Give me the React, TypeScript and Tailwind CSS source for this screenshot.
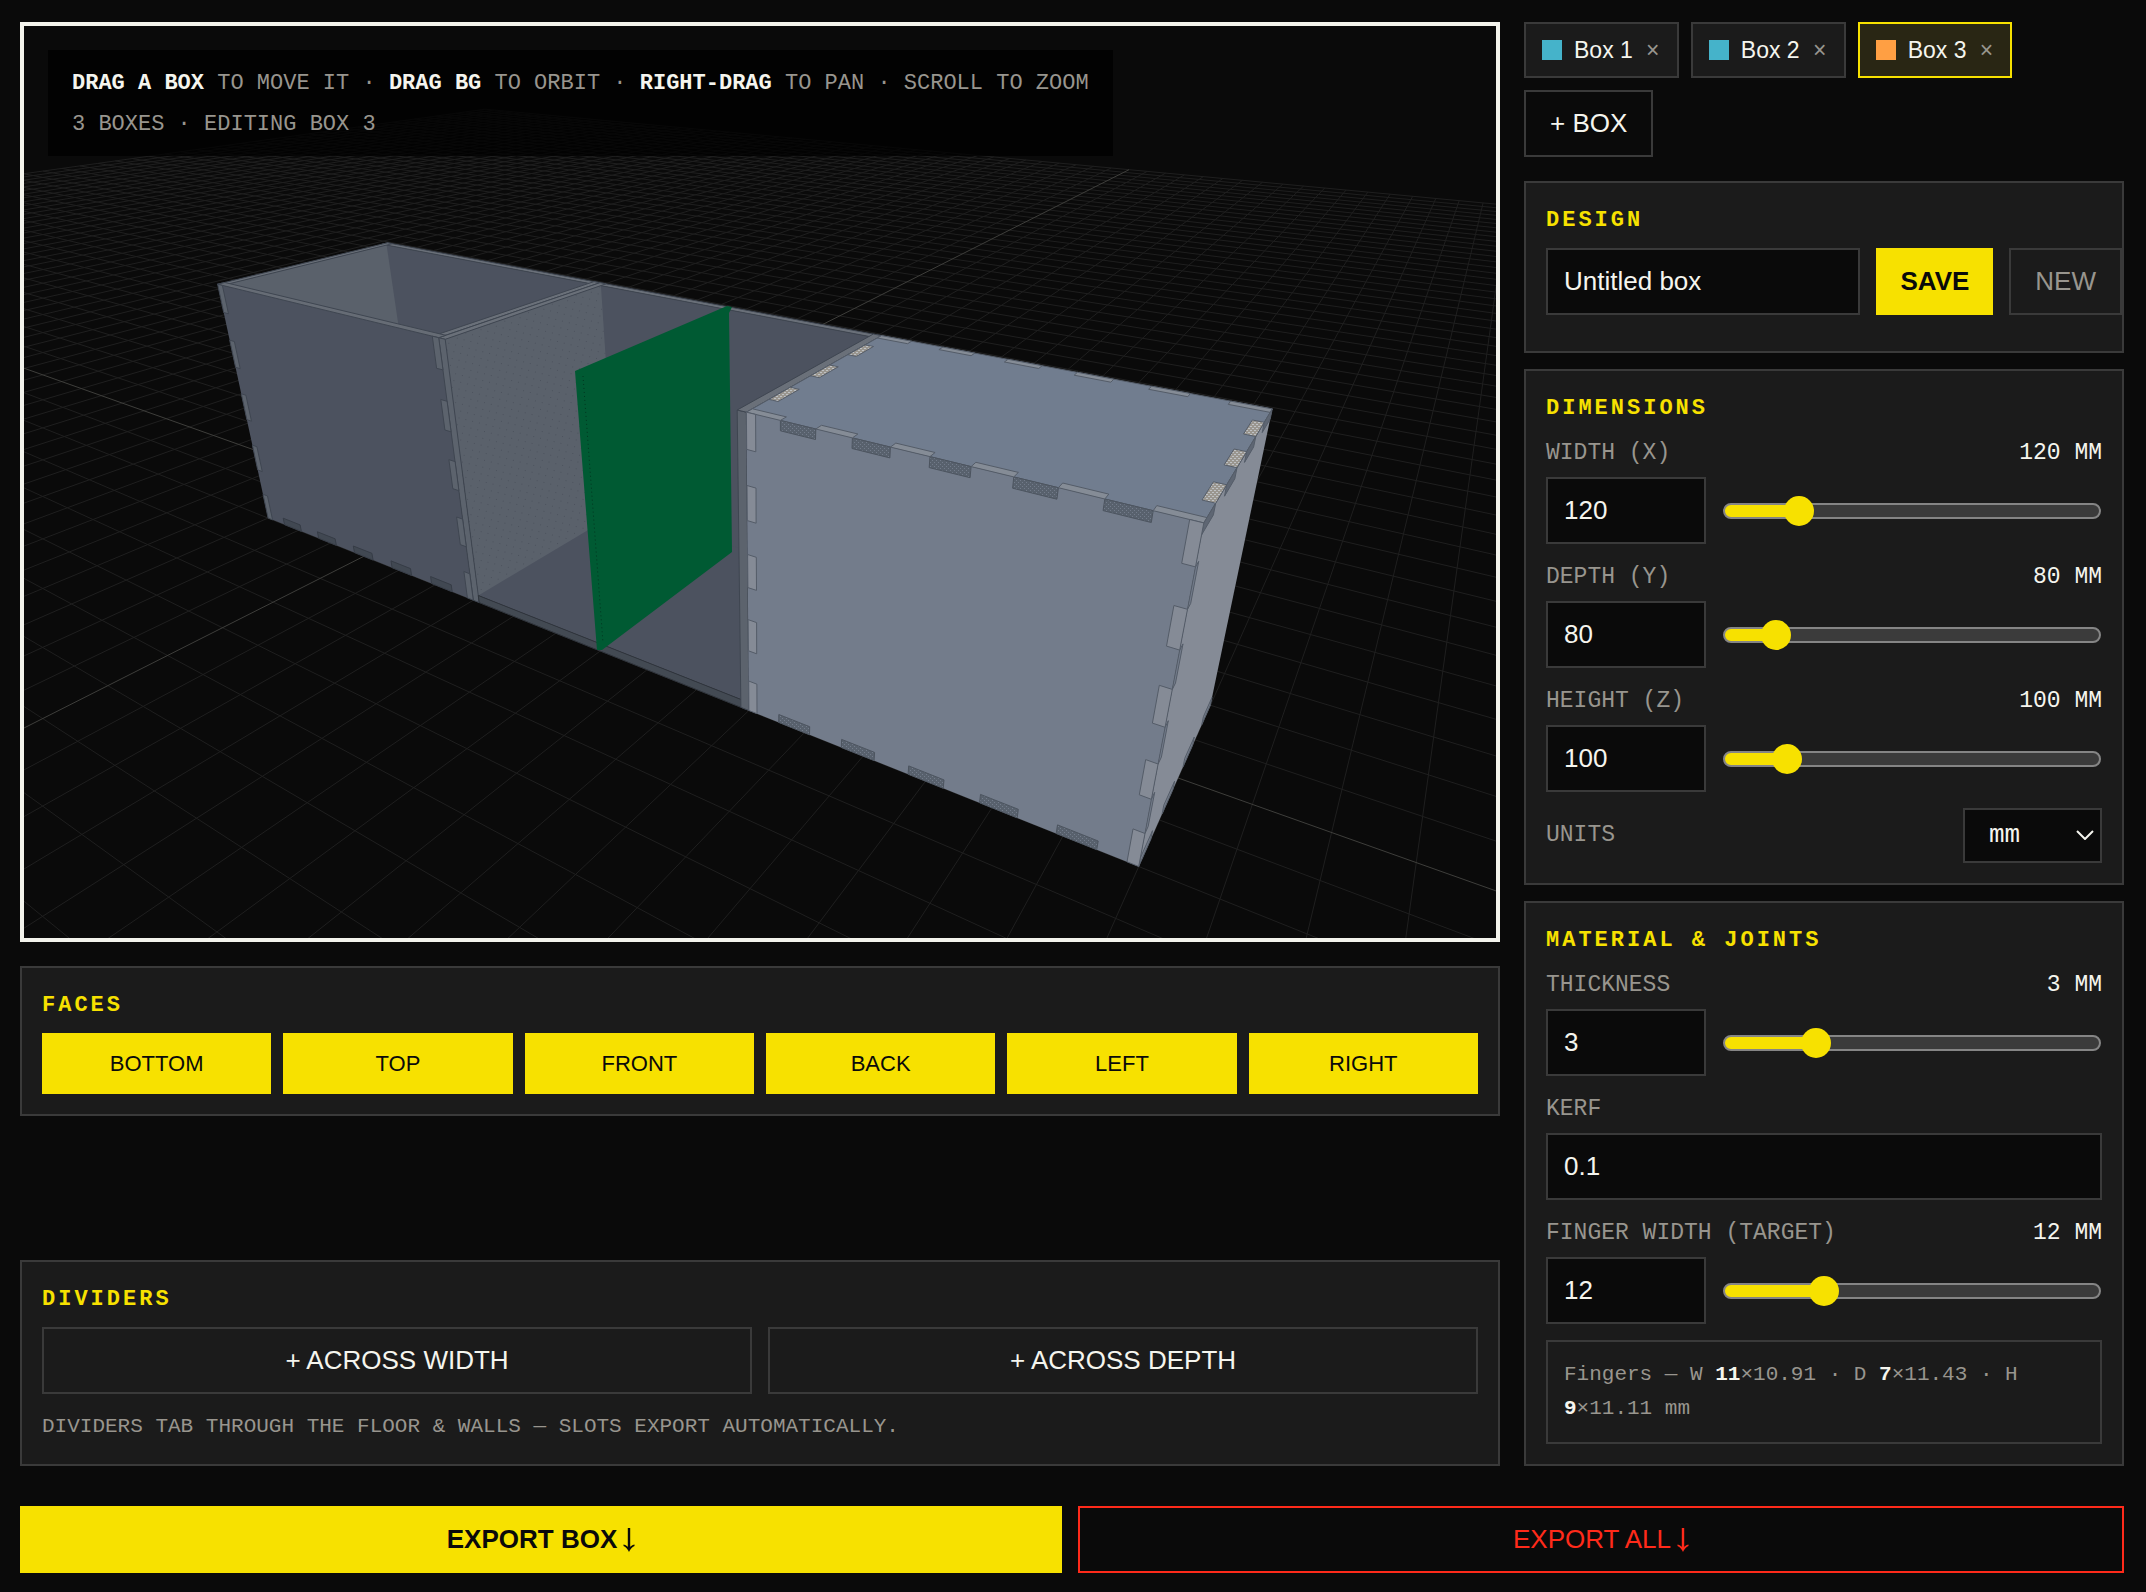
import React, { useMemo, useState } from "react";

/* ---------- scene projection ---------- */

type V3 = [number, number, number];
type V2 = [number, number];

// World corners (mm) and where the camera puts them on the 1472x912 stage.
const ANCHORS: [V3, V2][] = [
  [[0, 0, 100], [219, 285]],
  [[0, 0, 0], [269, 520]],
  [[120, 0, 100], [440, 336]],
  [[120, 0, 0], [472, 600]],
  [[240, 0, 100], [747, 412]],
  [[240, 0, 0], [748, 711]],
  [[360, 0, 100], [1205, 522]],
  [[360, 0, 0], [1138, 868]],
  [[360, 80, 100], [1274, 410]],
  [[360, 80, 0], [1212, 701]],
  [[240, 80, 100], [878, 336]],
  [[0, 80, 100], [386, 243]],
  [[60, 1040, 0], [1129, 170]],
  [[-940, 1040, 0], [485, 109]],
];

function solve(a: number[][], b: number[]): number[] {
  const n = b.length;
  const m = a.map((row, i) => [...row, b[i]]);
  for (let c = 0; c < n; c++) {
    let p = c;
    for (let r = c + 1; r < n; r++) if (Math.abs(m[r][c]) > Math.abs(m[p][c])) p = r;
    [m[c], m[p]] = [m[p], m[c]];
    for (let r = 0; r < n; r++) {
      if (r === c) continue;
      const f = m[r][c] / m[c][c];
      for (let k = c; k <= n; k++) m[r][k] -= f * m[c][k];
    }
  }
  return m.map((row, i) => row[n] / row[i]);
}

// Least-squares fit of a 3x4 camera matrix (last entry fixed to 1).
function fitCamera(): number[] {
  const rows: number[][] = [];
  const rhs: number[] = [];
  for (const [[X, Y, Z], [U, V]] of ANCHORS) {
    const x = X / 100, y = Y / 100, z = Z / 100, u = U / 1000, v = V / 1000;
    rows.push([x, y, z, 1, 0, 0, 0, 0, -u * x, -u * y, -u * z]);
    rhs.push(u);
    rows.push([0, 0, 0, 0, x, y, z, 1, -v * x, -v * y, -v * z]);
    rhs.push(v);
  }
  const n = 11;
  const ata = Array.from({ length: n }, (_, i) =>
    Array.from({ length: n }, (_, j) => rows.reduce((s, r) => s + r[i] * r[j], 0)),
  );
  const atb = Array.from({ length: n }, (_, i) => rows.reduce((s, r, k) => s + r[i] * rhs[k], 0));
  return solve(ata, atb);
}

const CAM = fitCamera();

function hom([X, Y, Z]: V3): V3 {
  const x = X / 100, y = Y / 100, z = Z / 100;
  return [
    (CAM[0] * x + CAM[1] * y + CAM[2] * z + CAM[3]) * 1000,
    (CAM[4] * x + CAM[5] * y + CAM[6] * z + CAM[7]) * 1000,
    CAM[8] * x + CAM[9] * y + CAM[10] * z + 1,
  ];
}

function project(p: V3): V2 {
  const [u, v, w] = hom(p);
  return [u / w, v / w];
}

function pts(list: V3[]): string {
  return list.map((p) => project(p).map((n) => n.toFixed(1)).join(",")).join(" ");
}

function groundLine(a: V3, b: V3): string {
  let ha = hom(a);
  let hb = hom(b);
  const near = 0.08;
  if (ha[2] < near && hb[2] < near) return "";
  const cut = (p: V3, q: V3): V3 => {
    const t = (near - p[2]) / (q[2] - p[2]);
    return [p[0] + (q[0] - p[0]) * t, p[1] + (q[1] - p[1]) * t, near];
  };
  if (ha[2] < near) ha = cut(ha, hb);
  if (hb[2] < near) hb = cut(hb, ha);
  const f = (h: V3) => `${(h[0] / h[2]).toFixed(1)} ${(h[1] / h[2]).toFixed(1)}`;
  return `M${f(ha)}L${f(hb)}`;
}

const odd = (n: number) => Array.from({ length: n }, (_, i) => i).filter((i) => i % 2 === 1);
const even = (n: number) => Array.from({ length: n }, (_, i) => i).filter((i) => i % 2 === 0);

const W = 120, D = 80, H = 100, T = 3;

// Quads lying in one of the three axis planes.
const onFront = (x0: number, x1: number, z0: number, z1: number, y = 0): V3[] => [[x0, y, z0], [x1, y, z0], [x1, y, z1], [x0, y, z1]];
const onTop = (x0: number, x1: number, y0: number, y1: number, z = H): V3[] => [[x0, y0, z], [x1, y0, z], [x1, y1, z], [x0, y1, z]];
const onSide = (x: number, y0: number, y1: number, z0: number, z1: number): V3[] => [[x, y0, z0], [x, y1, z0], [x, y1, z1], [x, y0, z1]];

function Face({ p, fill, edge = "none" }: { p: V3[]; fill: string; edge?: string }) {
  return <polygon points={pts(p)} fill={fill} stroke={edge} strokeWidth={1} strokeLinejoin="round" />;
}

function Scene() {
  const grid = useMemo(() => {
    let d = "";
    for (let i = -50; i <= 50; i++) {
      if (i === 0) continue;
      d += groundLine([60 + i * 20, -960, 0], [60 + i * 20, 1040, 0]);
      d += groundLine([-940, 40 + i * 20, 0], [1060, 40 + i * 20, 0]);
    }
    return d;
  }, []);
  const axes = groundLine([60, -960, 0], [60, 1040, 0]) + groundLine([-940, 40, 0], [1060, 40, 0]);
  const fw = W / 11, fh = H / 9, fd = D / 7;
  const dimEdge = "#3f4651";
  const litEdge = "#545c68";

  return (
    <svg viewBox="24 26 1472 912" preserveAspectRatio="xMidYMid slice" className="block h-full w-full" role="img" aria-label="3D preview of three boxes">
      <defs>
        <pattern id="speckDark" width="4" height="4" patternUnits="userSpaceOnUse">
          <rect width="4" height="4" fill="#58616d" />
          <rect width="1" height="1" fill="#727b8a" />
          <rect x="2" y="2" width="1" height="1" fill="#727b8a" />
        </pattern>
        <pattern id="speckTan" width="4" height="4" patternUnits="userSpaceOnUse">
          <rect width="4" height="4" fill="#9a968f" />
          <rect width="2" height="1" fill="#bec1c4" />
          <rect x="2" y="2" width="2" height="1" fill="#bec1c4" />
        </pattern>
        <pattern id="speckWall" width="7" height="7" patternUnits="userSpaceOnUse" patternTransform="rotate(14)">
          <rect width="7" height="7" fill="#5a616b" />
          <rect width="1" height="1" fill="#4c525d" />
        </pattern>
      </defs>
      <rect x="24" y="26" width="1472" height="912" fill="#0a0a0a" />
      <path d={grid} stroke="#1f1f1f" strokeWidth={1} fill="none" />
      <path d={axes} stroke="#3e3e3b" strokeWidth={1} fill="none" />

      {/* open boxes 1 and 2: inside faces */}
      <Face p={onFront(0, 2 * W, 0, H, D - T)} fill="#4c525f" />
      <Face p={onTop(W, 2 * W, 0, D, T)} fill="#4c525f" />
      <Face p={onSide(T, T, D - T, 0, H)} fill="#5a616b" />
      <Face p={onTop(0, 2 * W, D - T, D)} fill="#6a7079" edge={dimEdge} />
      <Face p={onTop(0, T, 0, D)} fill="#6a7079" edge={dimEdge} />
      <Face p={onSide(W + T, 0, D - T, T, H)} fill="url(#speckWall)" />
      <Face p={onTop(W - T, W, 0, D)} fill="#6a7079" edge={dimEdge} />
      <Face p={onTop(W, W + T, 0, D)} fill="#6a7079" edge={dimEdge} />

      {/* box 1: front wall */}
      <Face p={onFront(0, W, 0, H)} fill="#4c525f" />
      <Face p={onTop(0, W, 0, T)} fill="#666c75" edge={dimEdge} />
      <Face p={onFront(W, W + T, 0, H)} fill="#5c636d" edge={dimEdge} />
      {even(9).map((i) => (
        <g key={i}>
          <Face p={onFront(0, T, H - (i + 1) * fh, H - i * fh)} fill="#5c636d" edge={dimEdge} />
          <Face p={onFront(W - T, W, H - (i + 1) * fh, H - i * fh)} fill="#5c636d" edge={dimEdge} />
        </g>
      ))}
      {odd(11).map((i) => (
        <Face key={i} p={onFront(i * fw, (i + 1) * fw, 0, T)} fill="#414852" edge="#363c46" />
      ))}

      {/* box 2: floor edge, right wall and divider */}
      <Face p={onFront(W + T, 2 * W, 0, T)} fill="#434a53" edge="#30353d" />
      <Face p={onFront(2 * W - T, 2 * W, 0, H)} fill="#5c636d" edge={dimEdge} />
      <Face p={onTop(2 * W - T, 2 * W, 0, D)} fill="#6a7079" edge={dimEdge} />
      <polygon points="575,371 727,306 732,307 729,313 732,552 602,650 597,650" fill="#005a33" />
      <path d="M583 376L603 643" stroke="#00351f" strokeWidth={1} strokeDasharray="1 3" fill="none" />

      {/* box 3 */}
      <Face p={onSide(3 * W, 0, D, 0, H)} fill="#858b96" />
      <Face p={onTop(2 * W, 3 * W, 0, D)} fill="#717d8f" edge={litEdge} />
      <Face p={onFront(2 * W, 3 * W, 0, H)} fill="#737c8b" />
      {odd(11).map((i) => (
        <g key={i}>
          <Face p={onFront(2 * W + i * fw, 2 * W + (i + 1) * fw, H - T, H)} fill="url(#speckDark)" edge="#4c545f" />
          <Face p={onFront(2 * W + i * fw, 2 * W + (i + 1) * fw, 0, T)} fill="url(#speckDark)" edge="#4c545f" />
        </g>
      ))}
      {even(11).map((i) => (
        <g key={i}>
          <Face p={onTop(2 * W + i * fw, 2 * W + (i + 1) * fw, 0, T)} fill="#858c96" edge={litEdge} />
          <Face p={onTop(2 * W + i * fw, 2 * W + (i + 1) * fw, D - T, D)} fill="#858c96" edge={litEdge} />
        </g>
      ))}
      {odd(7).map((i) => (
        <g key={i}>
          <Face p={onTop(2 * W, 2 * W + T, i * fd, (i + 1) * fd)} fill="url(#speckTan)" edge={litEdge} />
          <Face p={onTop(3 * W - T, 3 * W, i * fd, (i + 1) * fd)} fill="url(#speckTan)" edge={litEdge} />
        </g>
      ))}
      {even(7).map((i) => (
        <g key={i}>
          <Face p={onSide(3 * W, i * fd, (i + 1) * fd, H - T, H)} fill="#5e6673" edge={litEdge} />
          <Face p={onSide(3 * W, i * fd, (i + 1) * fd, 0, T)} fill="#747c89" edge={litEdge} />
        </g>
      ))}
      {odd(9).map((i) => (
        <Face key={i} p={onSide(3 * W, 0, T, H - (i + 1) * fh, H - i * fh)} fill="#737c8b" edge={litEdge} />
      ))}
      {even(9).map((i) => (
        <g key={i}>
          <Face p={onFront(2 * W, 2 * W + T, H - (i + 1) * fh, H - i * fh)} fill="#858b96" edge={litEdge} />
          <Face p={onFront(3 * W - T, 3 * W, H - (i + 1) * fh, H - i * fh)} fill="#858b96" edge={litEdge} />
        </g>
      ))}
    </svg>
  );
}

/* ---------- controls ---------- */

const MONO = "font-['Liberation_Mono',monospace]";
const FIELD = "h-[67px] border-2 border-[#3a3a3a] bg-[#0a0a0a] px-4 text-[26px] text-[#f5f5ee] outline-none";
const OUTLINE_BTN = "h-[67px] border-2 border-[#3a3a3a] px-6 text-[26px] text-[#f5f5ee]";

function Panel({ title, className = "", children }: { title: string; className?: string; children: React.ReactNode }) {
  return (
    <section className={`border-2 border-[#3a3a3a] bg-[#1b1b1b] p-5 ${className}`}>
      <h2 className={`${MONO} mb-[11px] pt-px text-[22px] leading-[33px] font-bold tracking-[3px] text-[#f7e100]`}>{title}</h2>
      {children}
    </section>
  );
}

function Label({ id, text, value }: { id: string; text: string; value?: string }) {
  return (
    <div className={`${MONO} mb-[7px] flex justify-between pt-px text-[23px] leading-[33px]`}>
      <label htmlFor={id} className="text-[#98958e]">{text}</label>
      {value && <output htmlFor={id} className="text-[#f5f5ee]">{value}</output>}
    </div>
  );
}

function SliderField({ id, label, initial, min, max }: { id: string; label: string; initial: number; min: number; max: number }) {
  const [v, setV] = useState(initial);
  const f = (v - min) / (max - min);
  const fill = {
    "--fill": `calc(${(f * 100).toFixed(2)}% + ${(15 - 30 * f).toFixed(1)}px)`,
  } as React.CSSProperties;
  return (
    <div>
      <Label id={id} text={label} value={`${v} MM`} />
      <div className="flex items-center gap-4">
        <input id={id} type="text" inputMode="numeric" value={v} onChange={(e) => setV(Number(e.target.value) || 0)} className={`${FIELD} w-40`} />
        <input
          type="range"
          aria-label={`${label} slider`}
          min={min}
          max={max}
          value={v}
          onChange={(e) => setV(Number(e.target.value))}
          style={fill}
          className="mx-px h-8 min-w-0 flex-1 cursor-pointer appearance-none bg-transparent outline-none [&::-webkit-slider-runnable-track]:h-4 [&::-webkit-slider-runnable-track]:rounded-full [&::-webkit-slider-runnable-track]:border-2 [&::-webkit-slider-runnable-track]:border-[#858585] [&::-webkit-slider-runnable-track]:bg-[linear-gradient(to_right,#f7e100_var(--fill),#3b3b3b_var(--fill))] [&::-webkit-slider-thumb]:-mt-[9px] [&::-webkit-slider-thumb]:size-[30px] [&::-webkit-slider-thumb]:appearance-none [&::-webkit-slider-thumb]:rounded-full [&::-webkit-slider-thumb]:bg-[#f7e100]"
        />
      </div>
    </div>
  );
}

function BoxTab({ name, swatch, active = false }: { name: string; swatch: string; active?: boolean }) {
  return (
    <div className={`flex h-14 items-center gap-3 border-2 px-4 ${active ? "border-[#f7e100] bg-[#292614]" : "border-[#3a3a3a] bg-[#1b1b1b]"}`}>
      <span className={`size-5 ${swatch}`} />
      <button type="button" className="text-[23px] leading-8 text-[#f5f5ee]">{name}</button>
      <button type="button" aria-label={`Remove ${name}`} className="w-4 text-center text-[23px] leading-8 text-[#98958e]">×</button>
    </div>
  );
}

function DownArrow() {
  return (
    <svg viewBox="0 0 12 24" className="ml-[6px] inline-block h-6 w-3" aria-hidden="true">
      <path d="M6 0V20" stroke="currentColor" strokeWidth={2.4} fill="none" />
      <path d="M0.5 16.5C3 17 5 18.500 6 20C7 18.500 9 17 11.500 16.500V18C9 19 7 21.500 6 24C5 21.500 3 19 0.500 18Z" fill="currentColor" />
    </svg>
  );
}

const FACES = ["BOTTOM", "TOP", "FRONT", "BACK", "LEFT", "RIGHT"];

export default function App() {
  const [name, setName] = useState("Untitled box");
  const [kerf, setKerf] = useState("0.1");
  return (
    <div className="min-h-screen bg-[#0a0a0a] pt-[22px] pr-[22px] pb-5 pl-5 font-['Liberation_Sans',sans-serif] text-[#f5f5ee]">
      <main className="grid grid-cols-[minmax(0,1fr)_600px] gap-6">
        <div className="flex flex-col justify-between gap-6">
          <div className="flex flex-col gap-6">
            <div className="relative h-[920px] overflow-hidden border-4 border-[#f3f3ec]">
              <Scene />
              <div className={`${MONO} absolute top-6 left-6 bg-black/75 px-6 pt-[13px] pb-[11px] text-[22px] leading-[41px] text-[#98958e]`}>
                <p>
                  <b className="text-[#f5f5ee]">DRAG A BOX</b> TO MOVE IT · <b className="text-[#f5f5ee]">DRAG BG</b> TO ORBIT ·{" "}
                  <b className="text-[#f5f5ee]">RIGHT-DRAG</b> TO PAN · SCROLL TO ZOOM
                </p>
                <p>3 BOXES · EDITING BOX 3</p>
              </div>
            </div>
            <Panel title="FACES">
              <div className="grid grid-cols-6 gap-3">
                {FACES.map((f) => (
                  <button key={f} type="button" aria-pressed="true" className="h-[61px] bg-[#f7e100] text-[22px] text-[#0a0a0a]">{f}</button>
                ))}
              </div>
            </Panel>
          </div>
          <Panel title="DIVIDERS">
            <div className="grid grid-cols-2 gap-4">
              <button type="button" className={OUTLINE_BTN}>+ ACROSS WIDTH</button>
              <button type="button" className={OUTLINE_BTN}>+ ACROSS DEPTH</button>
            </div>
            <p className={`${MONO} mt-4 text-[21px] leading-[34px] text-[#98958e]`}>
              DIVIDERS TAB THROUGH THE FLOOR &amp; WALLS — SLOTS EXPORT AUTOMATICALLY.
            </p>
          </Panel>
        </div>

        <aside className="flex flex-col gap-4">
          <div className="mb-2 flex flex-wrap items-start gap-3">
            <BoxTab name="Box 1" swatch="bg-[#45b3ca]" />
            <BoxTab name="Box 2" swatch="bg-[#45b3ca]" />
            <BoxTab name="Box 3" swatch="bg-[#ff9f43]" active />
            <div className="w-full">
              <button type="button" className={OUTLINE_BTN}>+ BOX</button>
            </div>
          </div>

          <Panel title="DESIGN">
            <div className="-mr-5 mb-4 flex gap-4">
              <input aria-label="Design name" value={name} onChange={(e) => setName(e.target.value)} className={`${FIELD} min-w-0 flex-1`} />
              <button type="button" className="bg-[#f7e100] px-6 text-[26px] font-bold text-[#0a0a0a]">SAVE</button>
              <button type="button" className="border-2 border-[#3a3a3a] px-6 text-[26px] text-[#98958e]">NEW</button>
            </div>
          </Panel>

          <Panel title="DIMENSIONS">
            <div className="flex flex-col gap-4">
              <SliderField id="width" label="WIDTH (X)" initial={120} min={20} max={600} />
              <SliderField id="depth" label="DEPTH (Y)" initial={80} min={20} max={600} />
              <SliderField id="height" label="HEIGHT (Z)" initial={100} min={20} max={600} />
              <div className={`${MONO} flex items-center justify-between`}>
                <label htmlFor="units" className="text-[23px] leading-[33px] text-[#98958e]">UNITS</label>
                <div className="relative">
                  <select id="units" defaultValue="mm" className="block h-[55px] w-[139px] appearance-none border-2 border-[#3a3a3a] bg-[#0a0a0a] px-6 text-[26px] text-[#f5f5ee]">
                    <option>mm</option>
                    <option>in</option>
                  </select>
                  <svg viewBox="0 0 18 10" className="pointer-events-none absolute top-[22px] right-2 h-[10px] w-[18px]" aria-hidden="true">
                    <path d="M1 1L9 9L17 1" stroke="#f5f5ee" strokeWidth={2} fill="none" />
                  </svg>
                </div>
              </div>
            </div>
          </Panel>

          <Panel title="MATERIAL & JOINTS">
            <div className="flex flex-col gap-4">
              <SliderField id="thickness" label="THICKNESS" initial={3} min={1} max={10} />
              <div>
                <Label id="kerf" text="KERF" />
                <input id="kerf" value={kerf} onChange={(e) => setKerf(e.target.value)} className={`${FIELD} w-full`} />
              </div>
              <SliderField id="finger" label="FINGER WIDTH (TARGET)" initial={12} min={3} max={40} />
              <p className={`${MONO} border-2 border-[#3a3a3a] p-4 text-[21px] leading-[34px] text-[#98958e]`}>
                Fingers — W <b className="text-[#f5f5ee]">11</b>×10.91 · D <b className="text-[#f5f5ee]">7</b>×11.43 · H{" "}
                <b className="text-[#f5f5ee]">9</b>×11.11 mm
              </p>
            </div>
          </Panel>
        </aside>
      </main>

      <footer className="mt-10 flex gap-4">
        <button type="button" className="flex h-[67px] flex-1 items-center justify-center bg-[#f7e100] text-[26px] font-bold text-[#0a0a0a]">
          EXPORT BOX <DownArrow />
        </button>
        <button type="button" className="flex h-[67px] flex-1 items-center justify-center border-2 border-[#ff2a1a] text-[26px] text-[#ff2a1a]">
          EXPORT ALL <DownArrow />
        </button>
      </footer>
    </div>
  );
}
